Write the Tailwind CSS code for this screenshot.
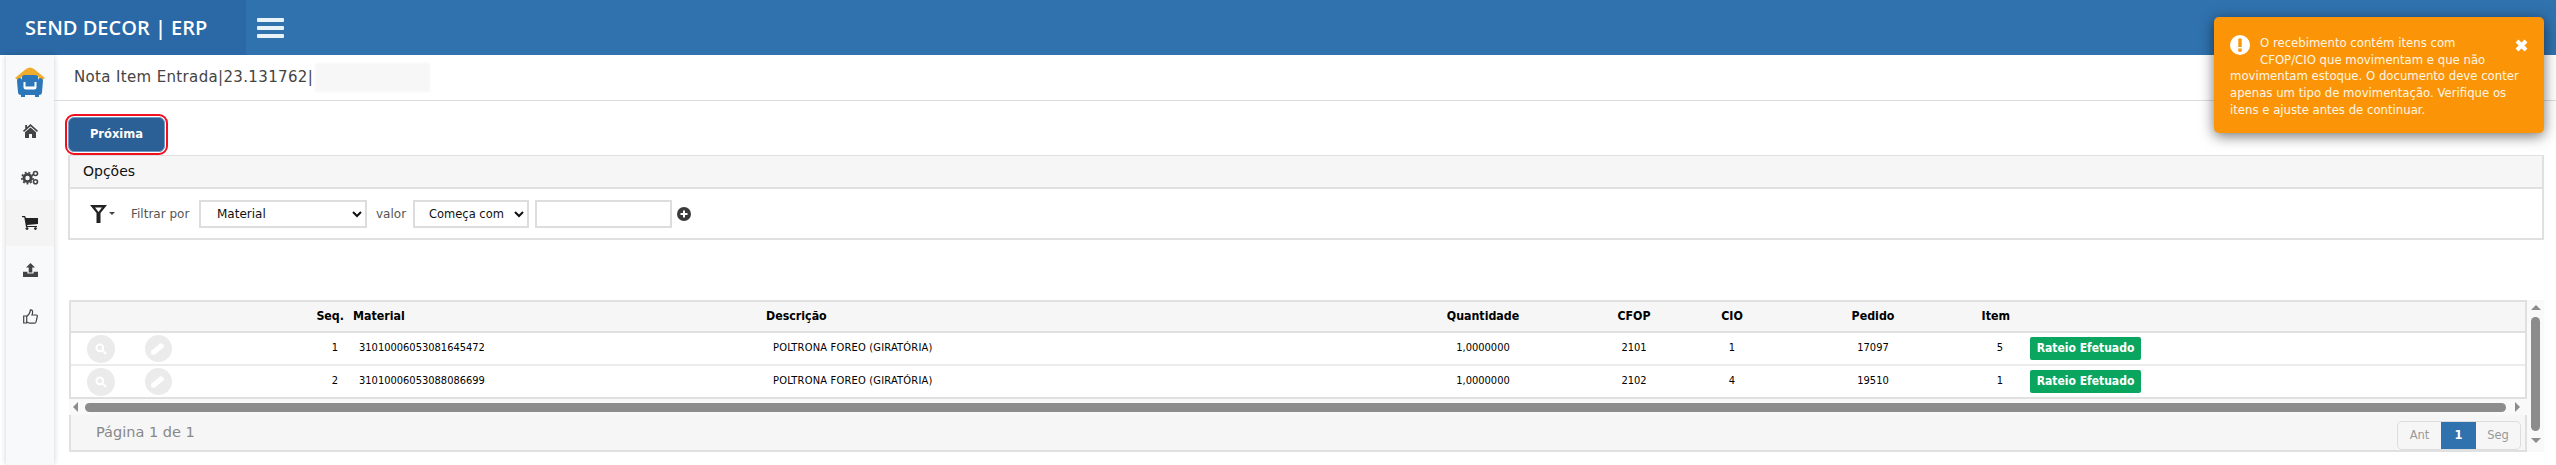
<!DOCTYPE html>
<html lang="pt-BR">
<head>
    <meta charset="UTF-8">
    <title>SEND DECOR | ERP</title>
    <script src="https://cdn.jsdelivr.net/npm/@tailwindcss/browser@4"></script>
</head>
<body class="relative h-[465px] overflow-hidden bg-white font-['DejaVu_Sans_Condensed','DejaVu_Sans',sans-serif] text-[11px] text-black">
    <!-- topo -->
    <header class="flex h-[55px] bg-[#3072ae]">
        <div class="flex w-[246px] items-center bg-[#2a69a5] pl-[25px] font-['Open_Sans',sans-serif] text-[20px] font-semibold text-white">SEND DECOR&nbsp;|&nbsp;ERP</div>
        <div class="ml-[11px] flex w-[27px] flex-col justify-center gap-[4px]">
            <span class="h-[4px] rounded-[1px] bg-white/90"></span>
            <span class="h-[4px] rounded-[1px] bg-white/90"></span>
            <span class="h-[4px] rounded-[1px] bg-white/90"></span>
        </div>
    </header>

    <div class="flex h-[410px]">
        <!-- menu lateral -->
        <aside class="ml-[6px] flex w-[48px] flex-col bg-[#f8f9fb] shadow-[0_0_6px_rgba(0,0,0,0.18)]">
            <div class="flex h-[53px] items-center justify-center pt-[1px]">
                <svg width="32" height="32" viewBox="0 0 32 32">
                    <path d="M1 12 L12 3 Q16 0 20 3 L31 12 L28 14 Q24 10 20 10 L12 10 Q8 10 4 14 Z" fill="#efac2d"/>
                    <path d="M3 15 Q3 12 6 12 Q8 12 8 15 L8 11 Q8 9 11 9 L21 9 Q24 9 24 11 L24 15 Q24 12 26 12 Q29 12 29 15 L28 26 Q28 29 25 29 L7 29 Q4 29 4 26 Z" fill="#2b77ba"/>
                    <path d="M9.5 16 L9.5 21 Q9.5 23.5 12 23.5 L20 23.5 Q22.5 23.5 22.5 21 L22.5 16 L20.5 16 L20.5 20.5 L11.5 20.5 L11.5 16 Z" fill="#fff"/>
                    <rect x="7" y="29" width="4" height="2" fill="#2b77ba"/><rect x="21" y="29" width="4" height="2" fill="#2b77ba"/>
                </svg>
            </div>
            <div class="flex h-[46px] items-center justify-center">
                <svg width="15" height="14" viewBox="0 0 15 14" fill="#444"><path d="M7.5 0 L15 6.7 L14 8 L7.5 2.2 L1 8 L0 6.7 L2.2 4.7 L2.2 1 L4 1 L4 3.1 Z"/><path d="M7.5 3.4 L13 8.2 L13 14 L9 14 L9 10 L6 10 L6 14 L2 14 L2 8.2 Z"/></svg>
            </div>
            <div class="flex h-[46px] items-center justify-center">
                <svg width="18" height="15" viewBox="0 0 18 15"><circle cx="6.5" cy="8" r="3.6" fill="none" stroke="#444" stroke-width="2.8"/><circle cx="6.5" cy="8" r="5.6" fill="none" stroke="#444" stroke-width="1.6" stroke-dasharray="2 1.8"/><circle cx="14.5" cy="3.5" r="2" fill="none" stroke="#444" stroke-width="1.6"/><circle cx="14.5" cy="11.8" r="2" fill="none" stroke="#444" stroke-width="1.6"/></svg>
            </div>
            <div class="flex h-[46px] items-center justify-center bg-[#f4f4f4]">
                <svg width="16" height="14" viewBox="0 0 16 14" fill="#222"><path d="M0 0 L3 0 L4 2 L16 2 L16 8 L5 9 L5.4 10 L15 10 L15 11 L4 11 L2.3 1.2 L0 1.2 Z"/><circle cx="5" cy="12.6" r="1.4"/><circle cx="13.4" cy="12.6" r="1.4"/></svg>
            </div>
            <div class="flex h-[47px] items-center justify-center">
                <svg width="15" height="14" viewBox="0 0 15 14" fill="#444"><path d="M7.5 0 L12 4.6 L9.3 4.6 L9.3 9.4 L5.7 9.4 L5.7 4.6 L3 4.6 Z"/><path d="M0 8.8 L4.4 8.8 L4.4 10.5 L10.6 10.5 L10.6 8.8 L15 8.8 L15 14 L0 14 Z"/></svg>
            </div>
            <div class="flex h-[46px] items-center justify-center">
                <svg width="15" height="15" viewBox="0 0 15 15" fill="none" stroke="#444" stroke-width="1.2"><path d="M0.7 7 L3.7 7 L3.7 14 L0.7 14 Z"/><path d="M3.7 7.4 Q6.5 5 7 3 L7.4 0.8 Q9.6 0.6 9.6 3 Q9.6 4.6 9 6 L13.2 6 Q14.5 6 14.3 7.5 L13 13 Q12.8 14.2 11.4 14.2 L6.5 14.2 L3.7 13"/></svg>
            </div>
        </aside>

        <main class="relative flex-1 pt-0">
            <!-- titulo -->
            <div class="flex h-[46px] items-center border-b border-[#dcdcdc] pl-[20px] font-['DejaVu_Sans',sans-serif] text-[15px] text-[#444]">
                <span class="tracking-[0.35px]">Nota Item Entrada|23.131762|</span>
                <span class="ml-[2px] h-[29px] w-[115px] bg-[#f7f7f7] blur-[1px]"></span>
            </div>

            <!-- botao -->
            <div class="ml-[11px] mt-[13px] flex h-[41px] w-[103px] items-center justify-center rounded-[9px] border-2 border-[#f0101e] p-px">
                <button class="h-full w-full rounded-[6px] border border-[#6f9cc6] bg-[#2a6095] font-['DejaVu_Sans',sans-serif] text-[11.5px] font-bold text-white">Próxima</button>
            </div>

            <!-- opcoes -->
            <section class="ml-[14px] mr-[12px] h-[85px] border-2 border-t-[1px] border-[#e0e0e0]">
                <div class="flex h-[33px] items-center border-b-2 border-[#e0e0e0] bg-[#f6f6f6] pl-[13px] font-['DejaVu_Sans',sans-serif] text-[14px] text-[#111]">Opções</div>
                <div class="flex h-[50px] items-center pl-[20px] font-['DejaVu_Sans',sans-serif] text-[12px] text-[#555]">
                    <svg width="25" height="18" viewBox="0 0 25 18" fill="#222"><path d="M0 0 L17 0 L10.5 8 L10.5 18 L6.5 18 L6.5 8 Z M5 2.5 L8.5 7 L8.5 7 L12 2.5 Z" fill-rule="evenodd"/><path d="M19 7 L25 7 L22 10 Z" fill="#444"/></svg>
                    <span class="ml-[16px] w-[68px]">Filtrar por</span>
                    <select class="h-[28px] w-[168px] border-2 border-[#ddd] bg-white pl-[12px] text-[12px] text-[#111]"><option>Material</option></select>
                    <span class="ml-[9px] w-[37px]">valor</span>
                    <select class="h-[28px] w-[116px] border-2 border-[#ddd] bg-white pl-[10px] text-[11.5px] text-[#111]"><option>Começa com</option></select>
                    <input class="ml-[6px] h-[28px] w-[137px] border-2 border-[#ddd] bg-white">
                    <svg class="ml-[5px]" width="14" height="14" viewBox="0 0 14 14"><circle cx="7" cy="7" r="7" fill="#3a3a3a"/><path d="M6 3.5 H8 V6 H10.5 V8 H8 V10.5 H6 V8 H3.5 V6 H6 Z" fill="#fff"/></svg>
                </div>
            </section>

            <!-- grade -->
            <div class="ml-[15px] mt-[60px] flex">
                <div class="w-[2458px]">
                    <div class="border-x-2 border-[#e0e0e0]">
                        <div class="grid h-[33px] grid-cols-[59px_56px_161px_413px_614px_218px_84px_112px_170px_64px_1fr] items-center border-y-2 border-[#e0e0e0] bg-[#f6f6f6] text-[12.3px] font-bold">
                            <span></span><span></span>
                            <span class="pr-[3px] text-right">Seq.</span>
                            <span class="pl-[6px]">Material</span>
                            <span class="pl-[6px]">Descrição</span>
                            <span class="text-center">Quantidade</span>
                            <span class="text-center">CFOP</span>
                            <span class="text-center">CIO</span>
                            <span class="text-center">Pedido</span>
                            <span class="pr-[12px] text-right">Item</span>
                            <span></span>
                        </div>
                        <div class="grid h-[33px] grid-cols-[59px_56px_161px_413px_614px_218px_84px_112px_170px_64px_1fr] items-center border-b-2 border-[#ececec]">
                            <span class="flex justify-center"><span class="flex h-[28px] w-[28px] items-center justify-center rounded-full bg-[#ebebeb]"><svg width="12" height="12" viewBox="0 0 12 12" fill="none" stroke="#fff" stroke-width="2"><circle cx="4.8" cy="4.8" r="3.4"/><path d="M7.5 7.5 L11 11"/></svg></span></span>
                            <span class="flex justify-center"><span class="flex h-[27px] w-[27px] items-center justify-center rounded-full bg-[#ebebeb]"><svg width="14" height="13" viewBox="0 0 14 13" fill="#fff"><path d="M0 9 L9 1.5 Q10 0.8 11 1.5 L13 3.5 Q13.6 4.4 13 5 L4 12.5 L0.5 12.8 Z"/></svg></span></span>
                            <span class="pr-[9px] text-right">1</span>
                            <span class="pl-[12px]">31010006053081645472</span>
                            <span class="pl-[13px] tracking-[0.2px]">POLTRONA FOREO (GIRATÓRIA)</span>
                            <span class="text-center">1,0000000</span>
                            <span class="text-center">2101</span>
                            <span class="text-center">1</span>
                            <span class="text-center">17097</span>
                            <span class="pr-[19px] text-right">5</span>
                            <span class="pl-[8px]"><span class="inline-block h-[23px] w-[111px] rounded-[2px] bg-[#0aa65f] text-center text-[12px] leading-[23px] font-bold text-white">Rateio Efetuado</span></span>
                        </div>
                        <div class="grid h-[33px] grid-cols-[59px_56px_161px_413px_614px_218px_84px_112px_170px_64px_1fr] items-center border-b-2 border-[#e0e0e0]">
                            <span class="flex justify-center"><span class="flex h-[28px] w-[28px] items-center justify-center rounded-full bg-[#ebebeb]"><svg width="12" height="12" viewBox="0 0 12 12" fill="none" stroke="#fff" stroke-width="2"><circle cx="4.8" cy="4.8" r="3.4"/><path d="M7.5 7.5 L11 11"/></svg></span></span>
                            <span class="flex justify-center"><span class="flex h-[27px] w-[27px] items-center justify-center rounded-full bg-[#ebebeb]"><svg width="14" height="13" viewBox="0 0 14 13" fill="#fff"><path d="M0 9 L9 1.5 Q10 0.8 11 1.5 L13 3.5 Q13.6 4.4 13 5 L4 12.5 L0.5 12.8 Z"/></svg></span></span>
                            <span class="pr-[9px] text-right">2</span>
                            <span class="pl-[12px]">31010006053088086699</span>
                            <span class="pl-[13px] tracking-[0.2px]">POLTRONA FOREO (GIRATÓRIA)</span>
                            <span class="text-center">1,0000000</span>
                            <span class="text-center">2102</span>
                            <span class="text-center">4</span>
                            <span class="text-center">19510</span>
                            <span class="pr-[19px] text-right">1</span>
                            <span class="pl-[8px]"><span class="inline-block h-[23px] w-[111px] rounded-[2px] bg-[#0aa65f] text-center text-[12px] leading-[23px] font-bold text-white">Rateio Efetuado</span></span>
                        </div>
                    </div>
                    <!-- barra horizontal -->
                    <div class="flex h-[16px] items-center bg-[#f9f9f9]">
                        <span class="ml-[4px] h-0 w-0 border-y-[5px] border-r-[5px] border-y-transparent border-r-[#8c8c8c]"></span>
                        <span class="ml-[7px] h-[9px] w-[2421px] rounded-full bg-[#8c8c8c]"></span>
                        <span class="ml-[9px] h-0 w-0 border-y-[5px] border-l-[5px] border-y-transparent border-l-[#8c8c8c]"></span>
                    </div>
                    <!-- rodape -->
                    <div class="flex h-[37px] items-center justify-between border-x-2 border-b-2 border-[#e0e0e0] bg-[#f6f6f6] pl-[25px] pr-[4px] font-['DejaVu_Sans',sans-serif]">
                        <span class="text-[14.5px] text-[#888]">Página 1 de 1</span>
                        <div class="flex h-[29px] self-end overflow-hidden rounded-[5px] border border-[#ddd] text-[11.5px] text-[#999]">
                            <span class="flex w-[43px] items-center justify-center">Ant</span>
                            <span class="flex w-[35px] items-center justify-center bg-[#3072ae] font-bold text-white">1</span>
                            <span class="flex w-[44px] items-center justify-center">Seg</span>
                        </div>
                    </div>
                </div>
                <!-- barra vertical -->
                <div class="flex h-[152px] w-[17px] flex-col items-center bg-[#f9f9f9] pt-[5px]">
                    <span class="h-0 w-0 border-x-[5px] border-b-[5px] border-x-transparent border-b-[#8c8c8c]"></span>
                    <span class="mt-[7px] h-[114px] w-[9px] rounded-full bg-[#8c8c8c]"></span>
                    <span class="mt-[7px] h-0 w-0 border-x-[5px] border-t-[5px] border-x-transparent border-t-[#8c8c8c]"></span>
                </div>
            </div>
        </main>
    </div>

    <!-- aviso -->
    <div class="absolute left-[2214px] top-[17px] h-[116px] w-[330px] rounded-[5px] bg-[#fb9507] pl-[16px] pr-[18px] pt-[18px] font-['DejaVu_Sans',sans-serif] text-[11.7px] leading-[16.7px] text-[#fff6e6] shadow-[0_3px_14px_rgba(0,0,0,0.55)]">
        <svg class="float-left mr-[10px]" width="20" height="20" viewBox="0 0 20 20"><circle cx="10" cy="10" r="10" fill="#fff"/><rect x="8.3" y="3.5" width="3.4" height="8.5" fill="#fb9507"/><rect x="8.3" y="13.5" width="3.4" height="3.2" fill="#fb9507"/></svg>
        <svg class="float-right ml-[14px] mr-[-2px] mt-[4px]" width="13" height="13" viewBox="0 0 13 13"><path d="M2 2 L11 11 M11 2 L2 11" stroke="#fff" stroke-width="4"/></svg>
        O recebimento contém itens com<br>CFOP/CIO que movimentam e que não<br>movimentam estoque. O documento deve conter<br>apenas um tipo de movimentação. Verifique os<br>itens e ajuste antes de continuar.
    </div>
</body>
</html>
